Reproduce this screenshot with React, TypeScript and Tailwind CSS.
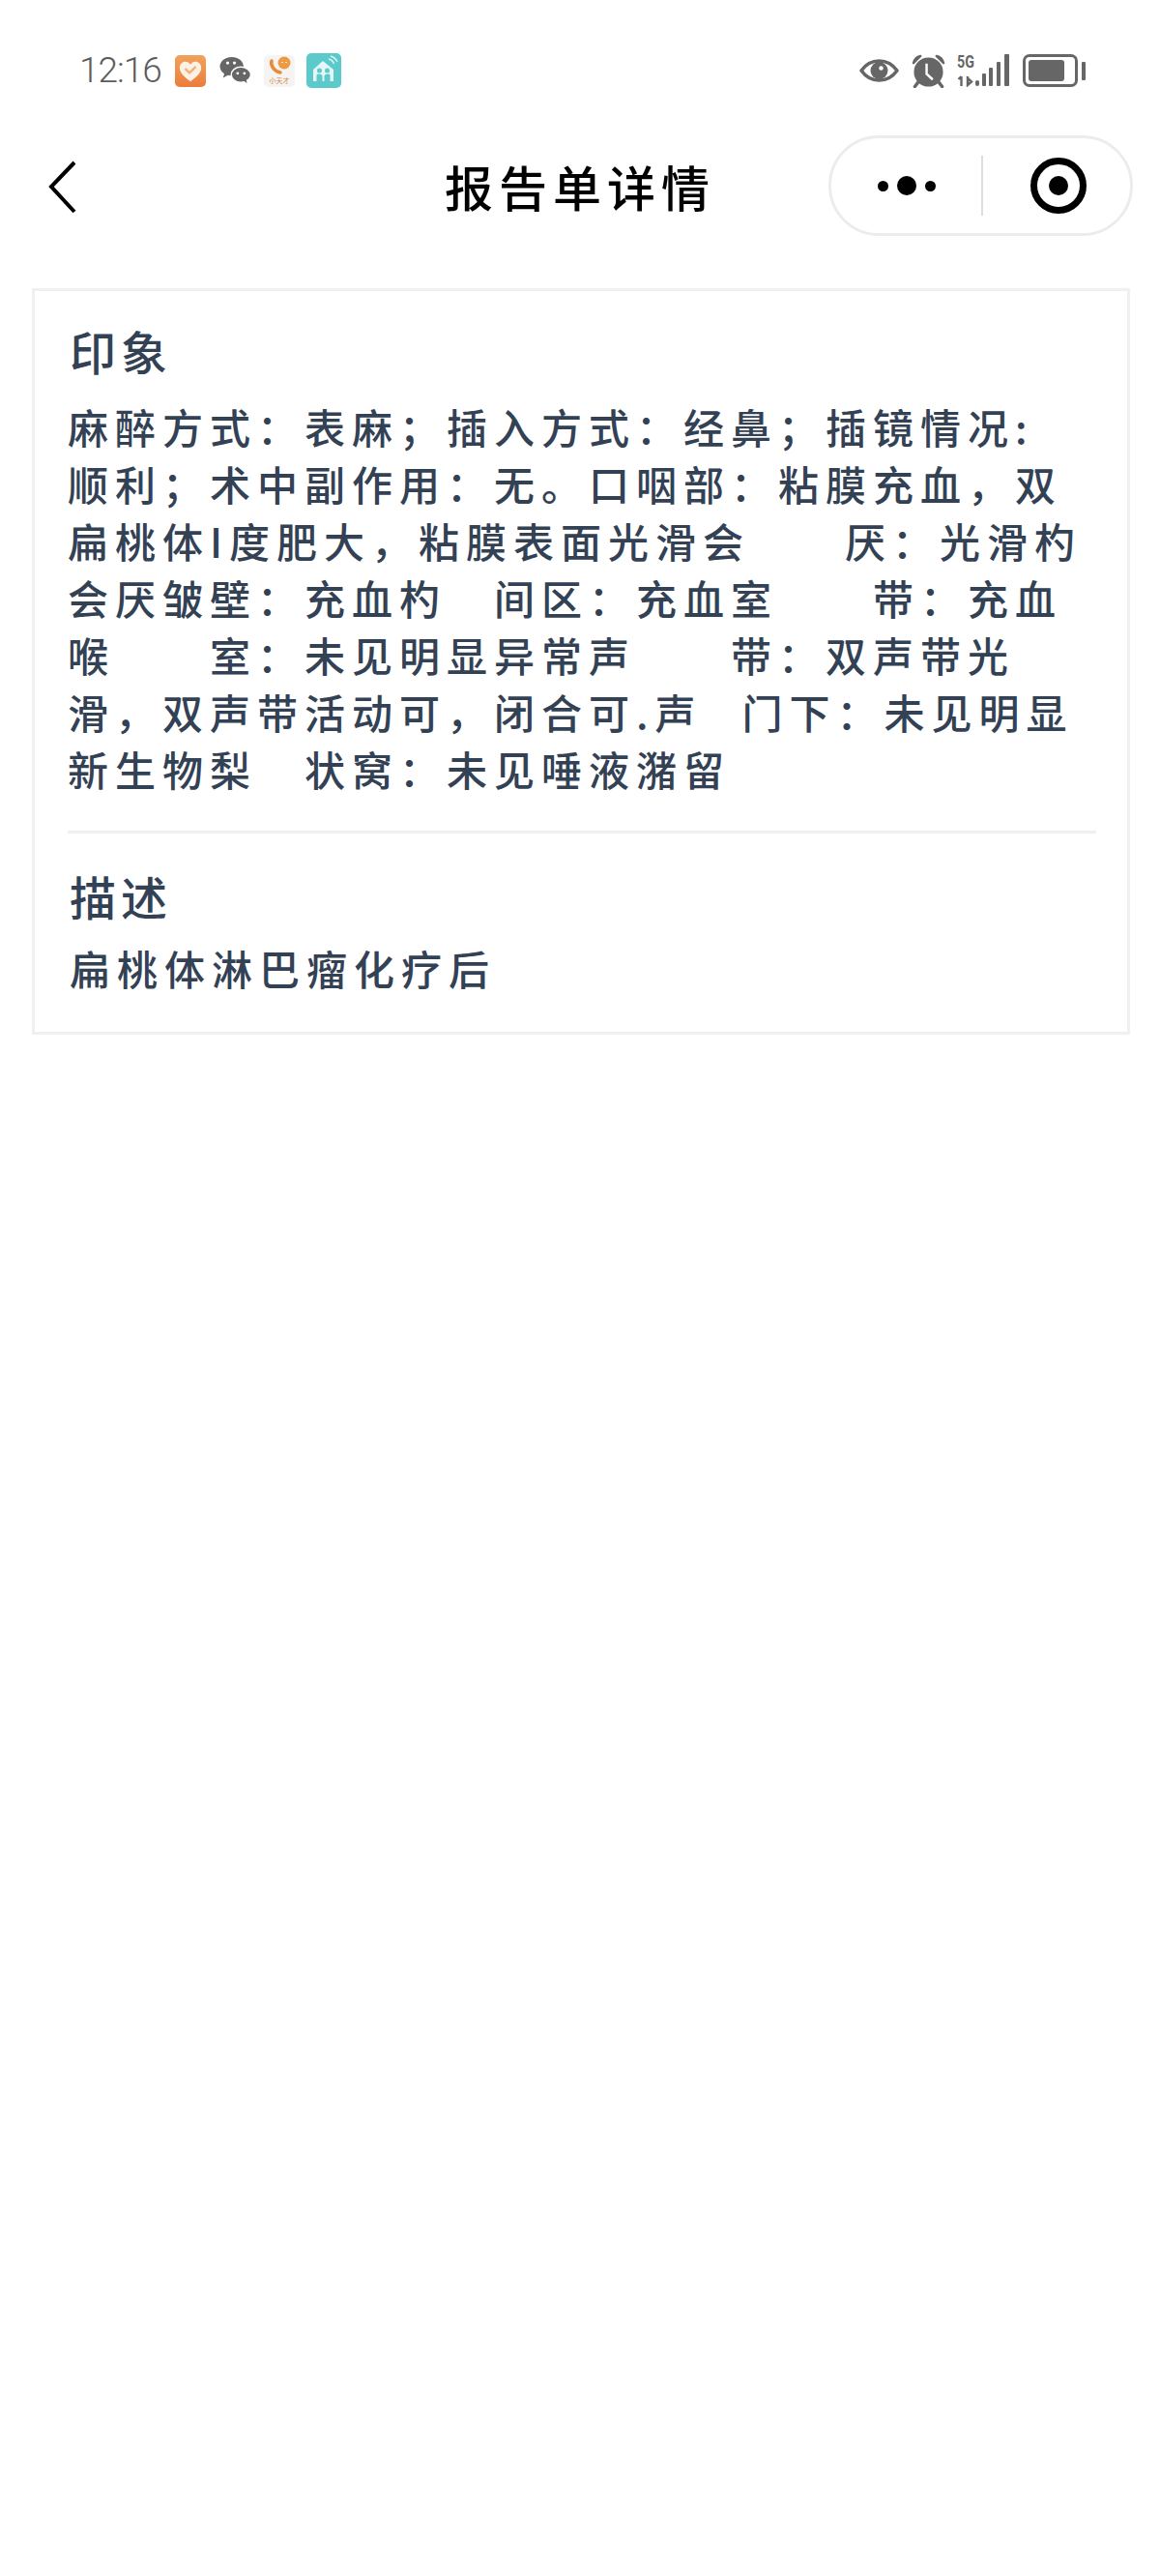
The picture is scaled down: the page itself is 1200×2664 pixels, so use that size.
const cjk = "font-['Noto_Sans_CJK_SC',sans-serif]";

const impression = [
  "麻醉方式：表麻；插入方式：经鼻；插镜情况:",
  "顺利；术中副作用：无。口咽部：粘膜充血，双",
  "扁桃体I度肥大，粘膜表面光滑会　　厌：光滑杓",
  "会厌皱壁：充血杓　间区：充血室　　带：充血",
  "喉　　室：未见明显异常声　　带：双声带光",
];

function HeartApp() {
  return (
    <svg width="32" height="33" viewBox="0 0 33 34">
      <defs>
        <linearGradient id="heartBg" x1="0" y1="0" x2="0" y2="1">
          <stop offset="0" stopColor="#f0a35c" />
          <stop offset="1" stopColor="#ec7c3c" />
        </linearGradient>
      </defs>
      <rect width="33" height="34" rx="5" fill="url(#heartBg)" />
      <path d="M16.500 28C9 23 5 18.500 5 13.500 5 9.500 8 7 11 7c2.300 0 4.300 1 5.500 3 1.200-2 3.200-3 5.500-3 3 0 6 2.500 6 6.500 0 5-4 9.500-11.500 14.500z" fill="#fdf1e4" />
      <path d="M11.500 15l4 4 6-6" fill="none" stroke="#f0b27a" strokeWidth="2.500" strokeLinecap="round" strokeLinejoin="round" />
    </svg>
  );
}

function WechatIcon() {
  return (
    <svg width="34" height="30" viewBox="0 0 35 32">
      <path d="M14 1C6.800 1 1 5.600 1 11.400c0 3.300 1.900 6.200 4.800 8.100L4.500 24l5.300-2.900c1.300.3 2.700.5 4.200.5 6 0 13-4 13-10.200C27 5.600 21.200 1 14 1z" fill="#666666" />
      <path d="M24 12c-5.800 0-10.500 3.800-10.500 8.500S18.200 29 24 29c1.200 0 2.400-.2 3.500-.5l4.500 3-1-4.700c2.400-1.600 4-3.900 4-6.300C35 15.800 29.800 12 24 12z" fill="#666666" stroke="#ffffff" strokeWidth="1.500" />
      <circle cx="9.500" cy="7.500" r="1.700" fill="#ffffff" />
      <circle cx="17" cy="7.500" r="1.700" fill="#ffffff" />
      <circle cx="20.500" cy="19" r="1.500" fill="#ffffff" />
      <circle cx="28" cy="19" r="1.500" fill="#ffffff" />
    </svg>
  );
}

function GeniusApp() {
  return (
    <div className="relative w-[32px] h-[33px] rounded-[5px] bg-[#f6f4f2] overflow-hidden">
      <svg width="32" height="24" viewBox="0 0 32 24" className="absolute left-0 top-0">
        <circle cx="21" cy="8" r="6.500" fill="#ee9a45" />
        <path d="M18 7.500h2M22 7.500h2" stroke="#fde6cc" strokeWidth="1" />
        <path d="M8 6c-1.500 5 3 11 9 12" fill="none" stroke="#e98a34" strokeWidth="3.500" strokeLinecap="round" />
      </svg>
      <span className={`absolute left-0 right-0 bottom-[3px] text-center text-[7px] leading-[8px] text-[#d98842] ${cjk}`}>小天才</span>
    </div>
  );
}

function HomeApp() {
  return (
    <svg width="36" height="36" viewBox="0 0 36 36">
      <rect width="36" height="36" rx="5" fill="#5ccacb" />
      <path d="M17 8L7 17v12h21V17z" fill="#e4f6f6" />
      <circle cx="13.500" cy="18" r="2.500" fill="#5ccacb" />
      <circle cx="21.500" cy="18" r="2.500" fill="#5ccacb" />
      <path d="M10.500 29v-6c0-2 6-2 6 1v5zM18.500 29v-5c0-3 6-3 6-1v6z" fill="#5ccacb" />
      <path d="M23 6c2.500.5 4.500 2.500 5.500 5M25 3c3 .8 5.500 3 7 6" fill="none" stroke="#e4f6f6" strokeWidth="1.300" />
    </svg>
  );
}

function EyeIcon() {
  return (
    <svg width="41" height="24" viewBox="0 0 41 24">
      <path d="M2 12C7 5 13 2 20.500 2S34 5 39 12c-5 7-11 10-18.500 10S7 19 2 12z" fill="none" stroke="#666666" strokeWidth="3.500" strokeLinejoin="round" />
      <circle cx="20.500" cy="12" r="9" fill="#666666" />
      <circle cx="22.500" cy="9.500" r="2.200" fill="#ffffff" />
    </svg>
  );
}

function AlarmIcon() {
  return (
    <svg width="35" height="35" viewBox="0 0 36 36">
      <circle cx="18" cy="19" r="15.500" fill="#666666" />
      <path d="M2 9.500C3 5.500 5.500 3 9.500 2zM34 9.500C33 5.500 30.500 3 26.500 2z" fill="#666666" stroke="#666666" strokeWidth="2.500" strokeLinejoin="round" />
      <path d="M7 30l-3.500 4.500M29 30l3.500 4.500" stroke="#666666" strokeWidth="3.500" strokeLinecap="round" />
      <path d="M16 10v11l6.500 6" fill="none" stroke="#ffffff" strokeWidth="2.500" />
    </svg>
  );
}

function SignalIcon() {
  return (
    <div className="relative w-[54px] h-[34px]">
      <span className="absolute left-0 top-[-2px] text-[#666666] text-[19px] leading-[20px] font-bold font-['Roboto',sans-serif] scale-x-[0.75] origin-left">5G</span>
      <svg width="54" height="34" viewBox="0 0 54 34" className="absolute left-0 top-0">
        <path d="M4.500 33V23M1.500 26l3-3M11 33V23M11 25l4 3.500L11 32z" fill="none" stroke="#666666" strokeWidth="2.400" />
        <rect x="19" y="27" width="4" height="6" rx="2" fill="#666666" />
        <rect x="26" y="20" width="4" height="13" rx="1" fill="#666666" />
        <rect x="33" y="14" width="4" height="19" rx="1" fill="#666666" />
        <rect x="41" y="8" width="4" height="25" rx="1" fill="#666666" />
        <rect x="49" y="0" width="5" height="33" rx="1" fill="#666666" />
      </svg>
    </div>
  );
}

function BatteryIcon() {
  return (
    <div className="flex items-center gap-[4px]">
      <div className="w-[57px] h-[34px] rounded-[7px] border-[3px] border-[#666666] p-[3px]">
        <div className="w-[37px] h-full rounded-[3px] bg-[#666666]" />
      </div>
      <div className="w-[4px] h-[19px] rounded-[1px] bg-[#666666]" />
    </div>
  );
}

function StatusBar() {
  return (
    <div className="h-[139px] pt-[54px] pl-[82px] pr-[77px] flex items-start justify-between">
      <div className="h-[38px] flex items-center">
        <span className="w-[99px] text-[37px] leading-[38px] font-light tracking-[-1px] text-[#5c5c5c] font-['Roboto',sans-serif]">12:16</span>
        <HeartApp />
        <div className="ml-[13px]"><WechatIcon /></div>
        <div className="ml-[13px]"><GeniusApp /></div>
        <div className="ml-[12px]"><HomeApp /></div>
      </div>
      <div className="h-[38px] flex items-center">
        <EyeIcon />
        <div className="ml-[13px]"><AlarmIcon /></div>
        <div className="ml-[12px]"><SignalIcon /></div>
        <div className="ml-[14px]"><BatteryIcon /></div>
      </div>
    </div>
  );
}

function NavBar() {
  return (
    <div className="relative h-[106px] flex items-center justify-center">
      <svg width="30" height="56" viewBox="0 0 30 56" className="absolute left-[50px] top-[27px]">
        <path d="M27 2L3 27l24 26" fill="none" stroke="#000000" strokeWidth="4" />
      </svg>
      <h1 className={`text-[50px] leading-[60px] font-medium tracking-[6px] text-black ${cjk}`}>报告单详情</h1>
      <div className="absolute left-[857px] top-[1px] w-[315px] h-[104px] rounded-[52px] border-[3px] border-[#ececec] flex items-center">
        <div className="w-[155px] flex items-center justify-center gap-[9px]">
          <span className="w-[11px] h-[11px] rounded-full bg-black" />
          <span className="w-[20px] h-[20px] rounded-full bg-black" />
          <span className="w-[11px] h-[11px] rounded-full bg-black" />
        </div>
        <div className="w-[2px] h-[62px] bg-[#dddddd]" />
        <div className="flex-1 pl-[4px] flex items-center justify-center">
          <div className="w-[58px] h-[58px] rounded-full border-[7px] border-black flex items-center justify-center">
            <span className="w-[20px] h-[20px] rounded-full bg-black" />
          </div>
        </div>
      </div>
    </div>
  );
}

export default function App() {
  return (
    <div className="w-[1200px] min-h-[2664px] bg-white">
      <StatusBar />
      <NavBar />
      <div className={`ml-[33px] mt-[53px] w-[1136px] h-[772px] border-[3px] border-[#f0f0f0] px-[34px] text-[#334155] ${cjk}`}>
        <h2 className="mt-[29px] text-[48px] leading-[64px] tracking-[5px] pl-[2px] font-medium">印象</h2>
        <div className="mt-[17px] text-[42px] leading-[59px] tracking-[7px] whitespace-pre font-medium">
          {impression.map((line) => (
            <div key={line}>{line}</div>
          ))}
          <div>滑，双声带活动可，闭合可.声<span className="tracking-[-1px]">　</span>门下：未见明显</div>
          <div>新生物梨　状窝：未见唾液潴留</div>
        </div>
        <div className="mt-[35px] w-[1064px] h-[3px] bg-[#f0f0f0]" />
        <h2 className="mt-[32px] text-[48px] leading-[64px] tracking-[5px] pl-[2px] font-medium">描述</h2>
        <div className="mt-[13px] text-[42px] leading-[59px] tracking-[7px] pl-[2px] font-medium">扁桃体淋巴瘤化疗后</div>
      </div>
    </div>
  );
}
